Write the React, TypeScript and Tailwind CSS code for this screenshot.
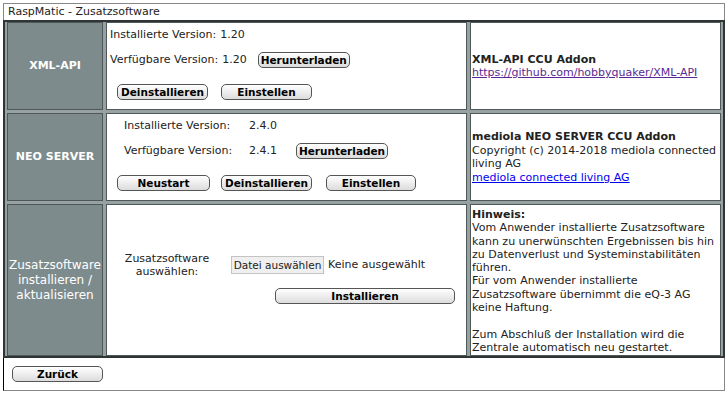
import React from 'react';

const font = { fontFamily: '"DejaVu Sans", Verdana, sans-serif' };

function Btn({ children, className = '' }: { children: React.ReactNode; className?: string }) {
  return (
    <button
      className={
        'h-[16px] rounded-[5px] border border-[#555] bg-gradient-to-b from-white to-[#dcdcdc] text-[10.5px] font-bold leading-[14px] text-black ' +
        className
      }
    >
      {children}
    </button>
  );
}

function Label({ children, className = '' }: { children: React.ReactNode; className?: string }) {
  return (
    <div
      className={
        'flex items-center justify-center border border-[#4f5859] bg-[#7e8b8c] text-center text-white ' + className
      }
    >
      {children}
    </div>
  );
}

function Cell({ children, className = '' }: { children: React.ReactNode; className?: string }) {
  return <div className={'border border-[#4f5859] bg-white ' + className}>{children}</div>;
}

export default function App() {
  return (
    <div className="h-[397px] w-[728px] bg-white text-[11px] text-[#222]" style={font}>
      <div className="mx-[3px] pt-[3px]">
        <div className="h-[17px] border border-b-0 border-[#888] px-[4px] text-[11px] leading-[16px]">
          RaspMatic - Zusatzsoftware
        </div>
        <div className="grid grid-cols-[96px_361px_1fr] grid-rows-[88px_88px_152px] gap-[3px] border-2 border-[#2f3535] bg-[#98a1a1] px-[2px]">
          <Label className="text-[11px] font-bold">XML-API</Label>
          <Cell className="pl-[3px] pt-[4px]">
            <div className="leading-[16px]">
              Installierte Version:<span className="ml-[4px]">1.20</span>
            </div>
            <div className="mt-[9px] flex items-center gap-[11px] leading-[16px]">
              <span>
                Verfügbare Version:<span className="ml-[4px]">1.20</span>
              </span>
              <Btn className="w-[92px]">Herunterladen</Btn>
            </div>
            <div className="ml-[7px] mt-[16px] flex gap-[13px]">
              <Btn className="w-[91px]">Deinstallieren</Btn>
              <Btn className="w-[91px]">Einstellen</Btn>
            </div>
          </Cell>
          <Cell className="flex flex-col justify-center px-[1px] leading-[13px]">
            <div className="font-bold">XML-API CCU Addon</div>
            <a href="#" className="text-[#5a2a94] underline">
              https://github.com/hobbyquaker/XML-API
            </a>
          </Cell>

          <Label className="text-[11px] font-bold">NEO SERVER</Label>
          <Cell className="pl-[10px] pt-[4px]">
            <div className="ml-[7px] flex leading-[16px]">
              <span className="w-[125px]">Installierte Version:</span>
              <span>2.4.0</span>
            </div>
            <div className="ml-[7px] mt-[9px] flex items-center leading-[16px]">
              <span className="w-[125px]">Verfügbare Version:</span>
              <span className="w-[47px]">2.4.1</span>
              <Btn className="w-[92px]">Herunterladen</Btn>
            </div>
            <div className="mt-[16px] flex">
              <Btn className="w-[93px]">Neustart</Btn>
              <Btn className="ml-[11px] w-[91px]">Deinstallieren</Btn>
              <Btn className="ml-[14px] w-[90px]">Einstellen</Btn>
            </div>
          </Cell>
          <Cell className="flex flex-col justify-center px-[1px] leading-[13.5px]">
            <div className="font-bold">mediola NEO SERVER CCU Addon</div>
            <div>Copyright (c) 2014-2018 mediola connected living AG</div>
            <a href="#" className="text-[#0000ee] underline">
              mediola connected living AG
            </a>
          </Cell>

          <Label className="text-[12px] leading-[15px]">
            Zusatzsoftware
            <br />
            installieren /
            <br />
            aktualisieren
          </Label>
          <Cell className="pl-[1px] pt-[47px]">
            <div className="flex items-center">
              <div className="w-[118px] text-center leading-[13px]">
                Zusatzsoftware
                <br />
                auswählen:
              </div>
              <button className="ml-[5px] h-[18px] w-[93px] border border-[#c4c4c4] bg-[#efefef] text-[10.5px] leading-[15px] text-[#222]">
                Datei auswählen
              </button>
              <span className="ml-[4px]">Keine ausgewählt</span>
            </div>
            <Btn className="ml-[167px] mt-[10px] w-[180px]">Installieren</Btn>
          </Cell>
          <Cell className="px-[1px] pt-[3px] leading-[13.3px]">
            <div className="font-bold">Hinweis:</div>
            <div>
              Vom Anwender installierte Zusatzsoftware kann zu unerwünschten Ergebnissen bis hin zu Datenverlust
              und Systeminstabilitäten führen.
            </div>
            <div>Für vom Anwender installierte Zusatzsoftware übernimmt die eQ-3 AG keine Haftung.</div>
            <div className="mt-[13.3px]">
              Zum Abschluß der Installation wird die Zentrale automatisch neu gestartet.
            </div>
          </Cell>
        </div>
        <div className="flex h-[33px] items-center border border-t-0 border-[#888] border-l-black pl-[8px]">
          <Btn className="w-[91px]">Zurück</Btn>
        </div>
      </div>
    </div>
  );
}
